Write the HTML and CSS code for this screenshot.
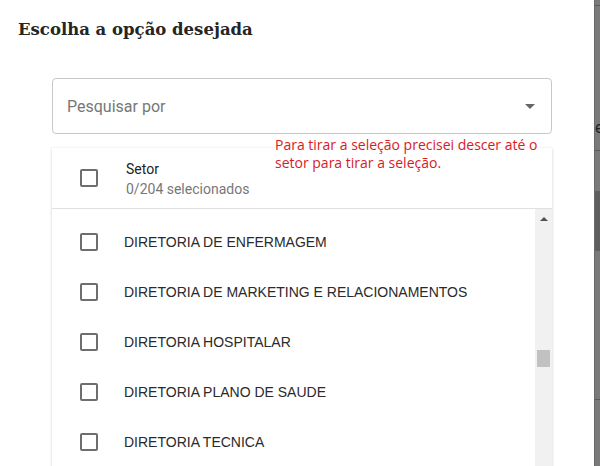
FILE: index.html
```html
<!DOCTYPE html>
<html lang="pt">
<head>
<meta charset="utf-8">
<title>Escolha a opção desejada</title>
<link rel="stylesheet" href="styles.css">
</head>
<body>
<div class="screen">
  <div class="modal">
    <h1 class="title">Escolha a opção desejada</h1>
    <div class="search">
      <span class="placeholder">Pesquisar por</span>
      <span class="caret"></span>
    </div>
    <p class="note">Para tirar a seleção precisei descer até o<br>setor para tirar a seleção.</p>
    <div class="panel">
      <div class="panel-head">
        <span class="checkbox"></span>
        <div class="head-text">
          <div class="head-label">Setor</div>
          <div class="head-count">0/204 selecionados</div>
        </div>
      </div>
      <div class="panel-body">
        <ul class="items">
          <li class="item"><span class="checkbox"></span><span class="item-label">DIRETORIA DE ENFERMAGEM</span></li>
          <li class="item"><span class="checkbox"></span><span class="item-label">DIRETORIA DE MARKETING E RELACIONAMENTOS</span></li>
          <li class="item"><span class="checkbox"></span><span class="item-label">DIRETORIA HOSPITALAR</span></li>
          <li class="item"><span class="checkbox"></span><span class="item-label">DIRETORIA PLANO DE SAUDE</span></li>
          <li class="item"><span class="checkbox"></span><span class="item-label">DIRETORIA TECNICA</span></li>
        </ul>
        <div class="scrollbar">
          <span class="sb-arrow"></span>
          <span class="sb-thumb"></span>
        </div>
      </div>
    </div>
  </div>
  <div class="backdrop">
    <div class="bd-line l1"></div>
    <div class="bd-light"><span class="bd-letter">e</span></div>
    <div class="bd-line l2"></div>
    <div class="bd-seg"></div>
    <div class="bd-dark"></div>
    <div class="bd-seg2"></div>
    <div class="bd-line l3"></div>
  </div>
</div>
</body>
</html>
```

FILE: styles.css
```css
* { box-sizing: border-box; }
html, body { margin: 0; padding: 0; }
body {
  width: 600px;
  height: 466px;
  overflow: hidden;
  background: #fff;
  font-family: Roboto, "Liberation Sans", Arial, sans-serif;
}
.screen {
  display: flex;
  height: 466px;
}
.modal {
  position: relative;
  width: 594px;
  height: 466px;
  background: #fff;
  overflow: hidden;
}
.title {
  margin: 0;
  padding: 18px 0 0 18px;
  height: 78px;
  font-family: "DejaVu Serif", "Liberation Serif", serif;
  font-weight: 700;
  font-size: 16.5px;
  line-height: 24px;
  color: #252525;
}
.search {
  margin-left: 52px;
  width: 500px;
  height: 56px;
  border: 1px solid #c8c8c8;
  border-radius: 4px;
  display: flex;
  align-items: center;
  padding: 0 16px 0 14px;
}
.placeholder {
  flex: 1;
  font-size: 16px;
  color: #777;
}
.caret {
  width: 0;
  height: 0;
  border-left: 5px solid transparent;
  border-right: 5px solid transparent;
  border-top: 5px solid #666;
}
.note {
  position: absolute;
  left: 275px;
  top: 136px;
  margin: 0;
  font-family: "Open Sans", "DejaVu Sans", sans-serif;
  font-size: 14px;
  line-height: 18px;
  color: #d91a1f;
  z-index: 2;
}
.panel {
  margin: 14px 0 0 52px;
  width: 500px;
  height: 400px;
  background: #fff;
  box-shadow: 0 1px 3px rgba(0,0,0,0.18), 0 0 1px rgba(0,0,0,0.08);
}
.panel-head {
  display: flex;
  align-items: center;
  height: 61px;
  padding-left: 28px;
  border-bottom: 1px solid #e0e0e0;
}
.checkbox {
  flex: none;
  width: 18px;
  height: 18px;
  border: 2px solid #6e6e6e;
  border-radius: 2px;
}
.head-text {
  margin-left: 28px;
  margin-top: 1px;
}
.head-label {
  font-size: 14px;
  line-height: 20px;
  color: #222;
}
.head-count {
  font-size: 14px;
  line-height: 20px;
  color: #777;
}
.panel-body {
  display: flex;
  height: 339px;
}
.items {
  list-style: none;
  margin: 0;
  padding: 8px 0 0;
  flex: 1;
}
.item {
  display: flex;
  align-items: center;
  height: 50px;
  padding-left: 28px;
}
.item-label {
  margin-left: 26px;
  font-family: "Liberation Sans", Arial, sans-serif;
  font-size: 14px;
  color: #2a2a2a;
}
.scrollbar {
  position: relative;
  width: 17px;
  background: #f1f1f1;
}
.sb-arrow {
  position: absolute;
  left: 5px;
  top: 8px;
  width: 0;
  height: 0;
  border-left: 4px solid transparent;
  border-right: 4px solid transparent;
  border-bottom: 4px solid #505050;
}
.sb-thumb {
  position: absolute;
  left: 2px;
  top: 141px;
  width: 13px;
  height: 17px;
  background: #c1c1c1;
}
.backdrop {
  flex: 1;
  display: flex;
  flex-direction: column;
  background: #7a7a7a;
  border-left: 1px solid #6a6a6a;
}
.bd-line { height: 1px; background: #5a5a5a; }
.l1 { margin-top: 5px; }
.bd-light {
  height: 144px;
  background: #7a7a7a;
  position: relative;
}
.bd-letter {
  position: absolute;
  left: 0;
  top: 114px;
  font-size: 16px;
  color: #222;
  font-family: Roboto, sans-serif;
  line-height: 16px;
}
.bd-seg { height: 40px; }
.bd-dark { height: 60px; background: #5f5f5f; }
.bd-seg2 { height: 148px; }
```
